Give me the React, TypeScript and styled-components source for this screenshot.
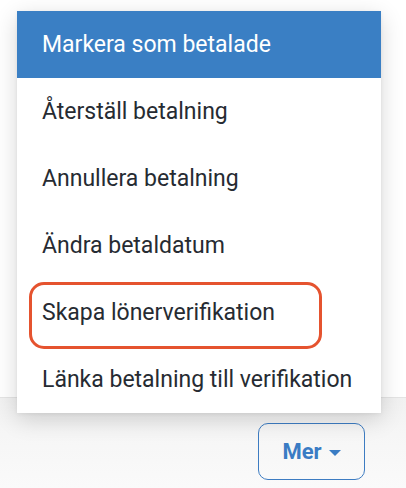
import React from "react";
import styled, { createGlobalStyle } from "styled-components";

const Global = createGlobalStyle`
  html, body { margin: 0; padding: 0; background: #ffffff; }
  body { font-family: Roboto, "Liberation Sans", Arial, sans-serif; -webkit-font-smoothing: antialiased; }
`;

const Page = styled.div`
  position: relative;
  width: 406px;
  height: 488px;
  display: flex;
  flex-direction: column;
  overflow: hidden;
`;

const Content = styled.div`
  height: 397px;
  background: #ffffff;
`;

const Footer = styled.div`
  flex: 1;
  display: flex;
  justify-content: flex-end;
  align-items: flex-start;
  padding: 25px 41px 0 0;
  background: linear-gradient(#f1f1f1, #f6f6f6 40%, #fafafa);
  border-top: 1px solid #e4e4e4;
  box-sizing: border-box;
`;

const MoreButton = styled.button`
  display: flex;
  align-items: center;
  justify-content: center;
  gap: 7px;
  width: 107px;
  height: 57px;
  border: 1px solid #3d7cc2;
  border-radius: 10px;
  background: transparent;
  color: #3a7cc4;
  font-family: Roboto, "Liberation Sans", Arial, sans-serif;
  font-weight: 700;
  font-size: 22px;
  padding: 0;
  cursor: pointer;
`;

const Caret = styled.span`
  width: 0;
  height: 0;
  border-left: 6.5px solid transparent;
  border-right: 6.5px solid transparent;
  border-top: 6px solid #3a7cc4;
  margin-top: 2px;
`;

const Menu = styled.ul`
  position: absolute;
  left: 17px;
  top: 11px;
  width: 364px;
  margin: 0;
  padding: 0;
  list-style: none;
  background: #ffffff;
  box-shadow: 0 6px 22px rgba(0, 0, 0, 0.16), 0 1px 4px rgba(0, 0, 0, 0.06);
`;

const Item = styled.li<{ $active?: boolean }>`
  position: relative;
  height: 67px;
  display: flex;
  align-items: center;
  padding-left: 25px;
  font-size: 23px;
  color: ${(p) => (p.$active ? "#ffffff" : "#262b32")};
  background: ${(p) => (p.$active ? "#3a7fc4" : "#ffffff")};
`;

const Ring = styled.span`
  position: absolute;
  z-index: 2;
  left: 12px;
  top: 3px;
  width: 293px;
  height: 67px;
  box-sizing: border-box;
  border: 3.5px solid #e5532f;
  border-radius: 15px;
  pointer-events: none;
`;

const items = [
  "Markera som betalade",
  "Återställ betalning",
  "Annullera betalning",
  "Ändra betaldatum",
  "Skapa lönerverifikation",
  "Länka betalning till verifikation",
];

export default function App() {
  return (
    <>
      <Global />
      <Page>
        <Content />
        <Footer>
          <MoreButton>
            Mer
            <Caret />
          </MoreButton>
        </Footer>
        <Menu>
          {items.map((t, i) => (
            <Item key={t} $active={i === 0}>
              {t}
              {i === 4 && <Ring />}
            </Item>
          ))}
        </Menu>
      </Page>
    </>
  );
}
